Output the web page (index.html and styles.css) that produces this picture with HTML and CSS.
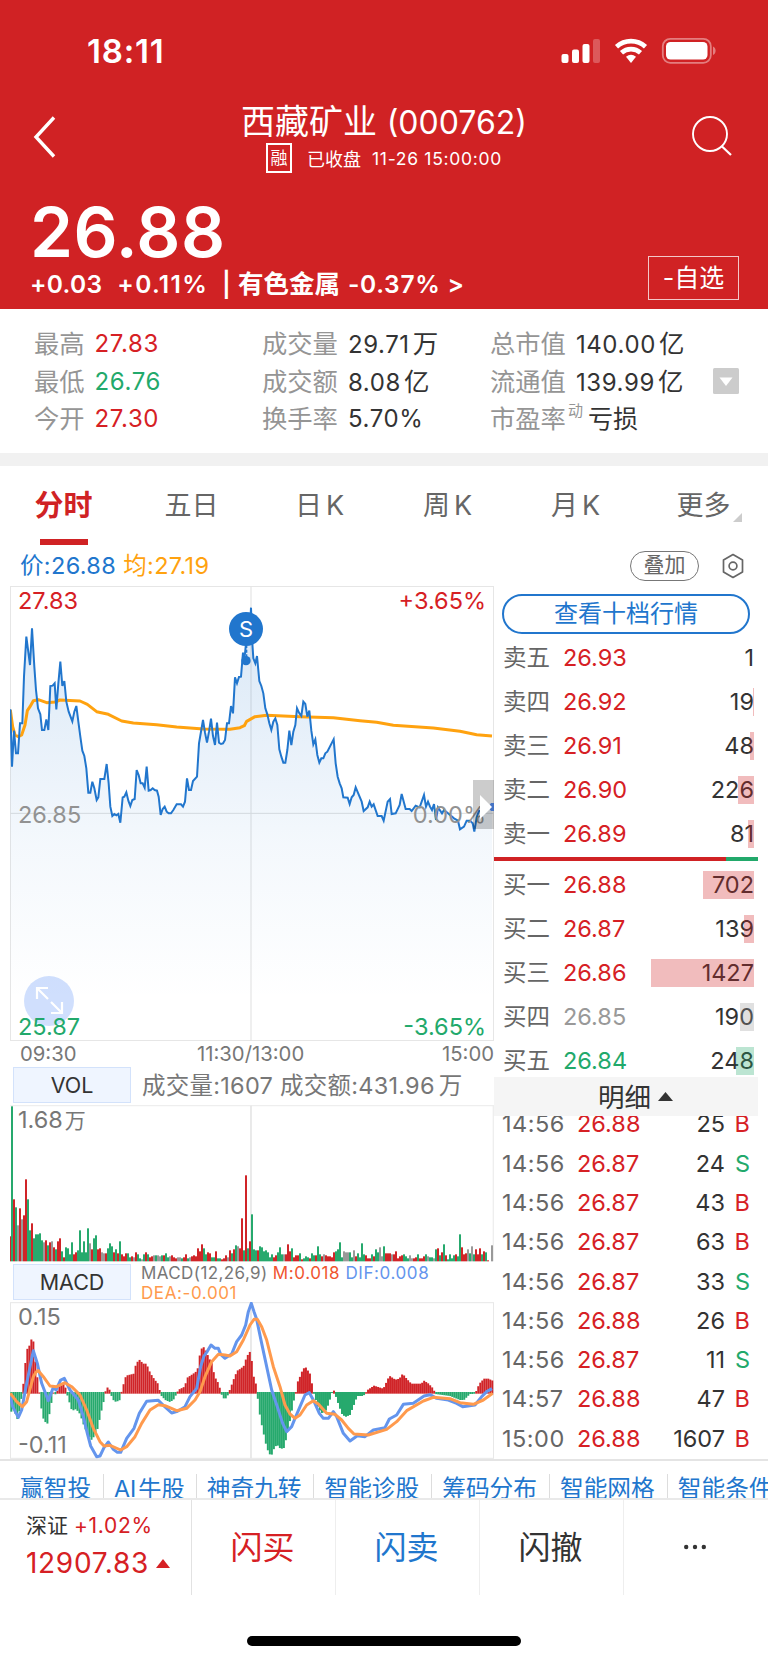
FILE: index.html
```
<!DOCTYPE html>
<html lang="zh-CN">
<head>
    <meta charset="UTF-8">
    <meta name="viewport" content="width=device-width, initial-scale=1.0">
    <title>西藏矿业 (000762)</title>
    <link rel="stylesheet" href="styles.css">
</head>
<body>

    <!-- Header -->
    <header class="header">
        <div class="status-bar">
            <span class="clock">18:11</span>
            <svg class="status-icons" width="156" height="28" viewBox="0 0 156 28">
                <g fill="#fff">
                    <rect x="1.500" y="17" width="7" height="9" rx="2"/>
                    <rect x="12" y="12.500" width="7" height="13.500" rx="2"/>
                    <rect x="22.500" y="7" width="7" height="19" rx="2"/>
                    <rect x="33" y="2" width="7" height="24" rx="2" opacity=".25"/>
                    <path d="M71 26l-5-6.200a8 8 0 0 1 10 0z"/>
                </g>
                <path d="M61.500 15.800a14 14 0 0 1 19 0M56.500 9.800a21.500 21.500 0 0 1 29 0" fill="none" stroke="#fff" stroke-width="4.600"/>
                <rect x="102.800" y="1.800" width="48" height="24" rx="7.500" fill="none" stroke="#fff" stroke-opacity=".42" stroke-width="1.800"/>
                <rect x="106" y="5" width="41.500" height="17.600" rx="4.500" fill="#fff"/>
                <path d="M153 9.500c3.500 1.500 3.500 7 0 8.500z" fill="#fff" opacity=".42"/>
            </svg>
        </div>
        <div class="title-bar">
            <svg width="24" height="44" viewBox="0 0 24 44">
                <path d="M21 2.500L3 22l18 19.500" fill="none" stroke="#fff" stroke-width="3.400"/>
            </svg>
            <div class="title">
                <h1>西藏矿业 <span>(000762)</span></h1>
                <div class="subtitle">
                    <span class="margin-tag">融</span>
                    <span class="closed">已收盘</span>
                    <span class="date">11-26 15:00:00</span>
                </div>
            </div>
            <svg width="42" height="42" viewBox="0 0 42 42">
                <circle cx="20" cy="19" r="17" fill="none" stroke="#fff" stroke-width="1.900"/>
                <path d="M31.500 31L41 40" stroke="#fff" stroke-width="2.200"/>
            </svg>
        </div>
        <div class="quote">
            <div>
                <div class="price">26.88</div>
                <div class="change">
                    <span class="c1">+0.03</span>
                    <span class="c2">+0.11%</span>
                    <span class="c3">|</span>
                    <span class="c4">有色金属</span>
                    <span class="c5">-0.37%</span>
                    <span>&gt;</span>
                </div>
            </div>
            <div class="watch-btn">-自选</div>
        </div>
    </header>

    <!-- Stats -->
    <section class="stats">
        <div class="stat"><label>最高</label><b class="red">27.83</b></div>
        <div class="stat"><label>成交量</label><b>29.71<i>万</i></b></div>
        <div class="stat"><label>总市值</label><b>140.00<i>亿</i></b></div>
        <div class="stat"><label>最低</label><b class="green">26.76</b></div>
        <div class="stat"><label>成交额</label><b>8.08<i>亿</i></b></div>
        <div class="stat"><label>流通值</label><b>139.99<i>亿</i></b></div>
        <div class="stat"><label>今开</label><b class="red">27.30</b></div>
        <div class="stat"><label>换手率</label><b>5.70%</b></div>
        <div class="stat"><label class="pe">市盈率<sup>动</sup></label><b class="cjk">亏损</b></div>
        <svg class="expand" width="27" height="26" viewBox="0 0 27 26">
            <rect width="26" height="26" rx="1.500" fill="#ccc"/>
            <path d="M6.500 9.500h13L13 18z" fill="#fff"/>
        </svg>
    </section>

    <!-- Tabs -->
    <nav class="tabs">
        <a class="active">分时</a>
        <a>五日</a>
        <a>日<span>K</span></a>
        <a>周<span>K</span></a>
        <a>月<span>K</span></a>
        <a class="more">更多</a>
    </nav>

    <div class="legend">
        <span class="now">价:26.88</span>
        <span class="avg">均:27.19</span>
        <span class="overlay">叠加</span>
        <svg width="24" height="28" viewBox="0 0 24 28">
            <path d="M12 2.500l9.500 5.600v11.800L12 25.500l-9.500-5.600V8.100z" fill="none" stroke="#666" stroke-width="1.700" stroke-linejoin="round"/>
            <circle cx="12" cy="14" r="3.900" fill="none" stroke="#666" stroke-width="1.700"/>
        </svg>
    </div>

    <main class="main">
        <div class="charts">
            <div class="chart price-chart">
                <svg width="484" height="455" viewBox="30 18 1452 1365">
                    <defs>
                        <linearGradient id="fill" gradientUnits="userSpaceOnUse" x1="0" y1="83" x2="0" y2="1260">
                            <stop offset="0" stop-color="#1e74cc" stop-opacity=".17"/>
                            <stop offset=".6" stop-color="#1e74cc" stop-opacity=".05"/>
                            <stop offset="1" stop-color="#1e74cc" stop-opacity="0"/>
                        </linearGradient>
                    </defs>
                    <rect x="31.500" y="19.500" width="1449" height="1362" fill="none" stroke="#e6e6e6" stroke-width="3"/>
                    <path d="M753 20V1382M31 700H1480" stroke="#dfdfdf" stroke-width="3"/>
                    <polygon id="area" fill="url(#fill)"/>
                    <polyline fill="none" stroke="#ffa20f" stroke-width="9" stroke-linejoin="round" points="31,390 38,440 45,465 55,470 65,465 75,435 82,392 90,380 100,362 115,359 140,368 165,366 180,360 240,363 262,373 290,395 325,403 365,423 400,429 470,434 530,441 610,447 690,448 720,443 733,437 740,424 765,410 800,406 900,410 1000,413 1080,422 1130,427 1180,436 1300,444 1380,454 1430,464 1476,468"/>
                    <polyline id="line" fill="none" stroke="#2176cd" stroke-width="6"/>
                    <path d="M740 195V235" stroke="#2176cd" stroke-width="4" stroke-dasharray="9 5"/>
                    <circle cx="738" cy="242" r="14" fill="#2176cd"/>
                    <circle cx="738" cy="147" r="51" fill="#2176cd"/>
                    <text x="738" y="171" class="mark">S</text>
                </svg>
                <span class="tl red">27.83</span>
                <span class="tr red">+3.65%</span>
                <span class="ml">26.85</span>
                <span class="mr">0.00%</span>
                <svg class="zoom-btn" width="50" height="50" viewBox="0 0 50 50">
                    <circle cx="25" cy="25" r="25" fill="#6495fa" opacity=".3"/>
                    <path d="M24 23L13 12M13 23V12H24M27 26L38 37M27 37H38V26" fill="none" stroke="#fff" stroke-width="2.200"/>
                </svg>
                <span class="bl green">25.87</span>
                <span class="br green">-3.65%</span>
                <svg class="drawer" width="21" height="49" viewBox="0 0 21 49">
                    <rect width="21" height="49" fill="#000" opacity=".2"/>
                    <path d="M15 27l3-4h3v8h-3z" fill="#4573c4"/>
                    <path d="M7 15v24l12-12z" fill="#fff"/>
                </svg>
            </div>
            <div class="axis"><span>09:30</span><span>11:30/13:00</span><span>15:00</span></div>

            <div class="indicator vol-row">
                <span class="pick">VOL</span>
                <span class="vol-text">成交量:1607 成交额:431.96<i>万</i></span>
            </div>
            <div class="chart">
                <svg width="484" height="157" viewBox="30 45 1452 471">
                    <path d="M31 47H1480V514" fill="none" stroke="#eee" stroke-width="4"/>
                    <path d="M753 47V514" stroke="#dfdfdf" stroke-width="4"/>
                    <g id="vol"></g>
                </svg>
                <span class="tl vol-max">1.68<i>万</i></span>
            </div>

            <div class="indicator macd-row">
                <span class="pick">MACD</span>
                <div class="macd-text">
                    <span>MACD(12,26,9)</span>
                    <span class="m">M:0.018</span>
                    <span class="dif">DIF:0.008</span>
                    <span class="dea">DEA:-0.001</span>
                </div>
            </div>
            <div class="chart">
                <svg width="484" height="157" viewBox="30 126 1452 471">
                    <rect x="31.500" y="128" width="1449" height="467" fill="none" stroke="#e8e8e8" stroke-width="3"/>
                    <path d="M753 128V595" stroke="#dfdfdf" stroke-width="4"/>
                    <g id="macd"></g>
                    <polyline fill="none" stroke="#6495ed" stroke-width="9" stroke-linejoin="round" points="31,410 38,440 55,472 65,450 80,370 100,272 112,310 125,370 145,422 160,382 168,390 182,360 193,355 210,390 235,420 250,470 262,520 272,558 290,590 300,588 312,563 325,546 340,568 352,577 362,577 380,535 402,505 418,460 440,424 475,421 490,436 515,459 530,455 555,440 570,410 590,385 602,320 612,288 622,274 633,255 645,265 655,265 662,283 675,295 695,282 710,245 725,225 737,195 745,155 754,130 762,155 770,178 785,250 800,320 815,390 832,440 848,490 860,515 875,500 885,475 900,440 915,405 928,398 940,420 958,460 970,475 985,475 1000,455 1010,470 1030,520 1050,543 1072,527 1095,530 1120,510 1155,503 1168,477 1190,465 1210,433 1240,430 1272,408 1290,404 1310,415 1345,420 1370,430 1388,440 1425,435 1445,410 1460,395 1476,386"/>
                    <polyline fill="none" stroke="#ff9a4d" stroke-width="9" stroke-linejoin="round" points="31,400 50,425 67,440 80,425 100,350 108,336 115,332 130,350 150,378 170,380 195,368 215,380 240,405 260,450 280,505 300,545 312,558 330,556 362,570 380,560 405,530 425,490 450,450 475,434 495,437 530,452 560,445 585,420 600,395 615,350 635,305 655,283 675,285 690,288 710,275 730,240 750,195 762,178 772,178 785,200 800,240 820,320 840,380 855,435 870,462 885,475 900,465 920,435 940,422 955,432 980,460 1005,463 1025,480 1045,505 1062,522 1105,525 1160,508 1190,485 1220,452 1270,423 1300,412 1350,416 1380,428 1420,433 1450,420 1478,400"/>
                </svg>
                <span class="tl">0.15</span>
                <span class="bl">-0.11</span>
            </div>
        </div>

        <!-- Order book -->
        <div class="book">
            <div class="level-btn">查看十档行情</div>
            <div id="asks"></div>
            <div class="ratio"></div>
            <div id="bids"></div>
            <div class="detail">明细<svg width="15" height="9" viewBox="0 0 15 9"><path d="M7.500 0L15 9H0z" fill="#333"/></svg></div>
            <div class="ticks" id="ticks"></div>
        </div>
    </main>

    <div class="links">
        <a>赢智投</a><a>AI<i>牛股</i></a><a>神奇九转</a><a>智能诊股</a><a>筹码分布</a><a>智能网格</a><a>智能条件单</a>
    </div>

    <!-- Bottom bar -->
    <footer class="bottom">
        <div class="index">
            <div class="index-name">深证 <span class="red">+1.02%</span></div>
            <div class="index-value">12907.83<svg width="14" height="9" viewBox="0 0 14 9"><path d="M7 0l7 9H0z" fill="#d62024"/></svg></div>
        </div>
        <a class="red">闪买</a>
        <a class="blue">闪卖</a>
        <a>闪撤</a>
        <a><svg width="24" height="6" viewBox="0 0 24 6"><g fill="#333"><circle cx="3.200" cy="3" r="2.200"/><circle cx="12" cy="3" r="2.200"/><circle cx="20.800" cy="3" r="2.200"/></g></svg></a>
    </footer>
    <div class="home-indicator"></div>

    <script src="chart.js"></script>
</body>
</html>
```
FILE: styles.css
```
* {
    margin: 0;
    padding: 0;
    box-sizing: border-box;
}
body {
    width: 768px;
    height: 1663px;
    overflow: hidden;
    font-family: Inter, 'Noto Sans CJK SC', sans-serif;
    background-color: #fff;
    color: #333;
}
i, b {
    font-style: normal;
    font-weight: normal;
}
svg {
    display: block;
    flex: none;
}
.red {
    color: #d62024;
}
.green {
    color: #22a96b;
}
.blue {
    color: #2176cd;
}

/* header */
.header {
    height: 309px;
    background-color: #d02224;
    color: #fff;
}
.status-bar {
    height: 102px;
    padding: 0 52px 0 87px;
    display: flex;
    justify-content: space-between;
    align-items: center;
}
.clock {
    font-size: 33px;
    font-weight: 600;
    letter-spacing: 0.8px;
}
.title-bar {
    height: 82px;
    padding: 0 36px 0 33px;
    display: flex;
    justify-content: space-between;
}
.title-bar > svg {
    margin-top: 13px;
}
.title {
    text-align: center;
    margin-left: 21px;
}
.title h1 {
    height: 40px;
    line-height: 40px;
    font-size: 34px;
    font-weight: 400;
}
.title h1 span {
    font-size: 32px;
}
.subtitle {
    height: 32px;
    display: flex;
    justify-content: center;
    align-items: center;
    font-size: 17.5px;
}
.margin-tag {
    width: 26px;
    height: 30px;
    line-height: 26px;
    border: 2px solid #fff;
    font-size: 17px;
}
.closed {
    margin: 0 11px 0 15px;
    font-size: 18px;
}
.date {
    letter-spacing: 0.7px;
}
.quote {
    height: 125px;
    padding: 0 29px 0 30px;
    display: flex;
    justify-content: space-between;
}
.price {
    height: 82px;
    padding-top: 14px;
    line-height: 69px;
    font-size: 69px;
    font-weight: 600;
    letter-spacing: 0.4px;
}
.change {
    height: 36px;
    line-height: 36px;
    display: flex;
    font-size: 24.500px;
    font-weight: 600;
}
.c1 {
    margin-right: 15px;
    letter-spacing: 0.3px;
}
.c2 {
    margin-right: 14px;
    letter-spacing: 1.3px;
}
.c3 {
    margin-right: 7px;
}
.c4 {
    margin-right: 8px;
    font-size: 25.5px;
}
.c5 {
    margin-right: 7px;
    letter-spacing: 0.7px;
}
.watch-btn {
    width: 91px;
    height: 44px;
    line-height: 42px;
    margin-top: 72px;
    border: 1px solid rgba(255, 255, 255, 0.75);
    font-size: 25px;
    text-align: center;
}

/* stats */
.stats {
    position: relative;
    height: 157px;
    padding: 16px 0 0 34px;
    display: grid;
    grid-template-columns: 228px 228px 1fr;
    grid-template-rows: repeat(3, 37.5px);
    border-bottom: 13px solid #f1f1f1;
}
.stat {
    display: flex;
    line-height: 38px;
    font-size: 25.3px;
}
.stat label {
    color: #959595;
    margin-right: 10px;
}
.stat b {
    font-size: 24px;
    letter-spacing: 0.6px;
}
.stat b i {
    margin-left: 3px;
    font-size: 25.5px;
}
.stat .pe {
    margin-right: 5px;
}
.stat .cjk {
    font-size: 25px;
    letter-spacing: 0;
}
.pe sup {
    font-size: 15px;
    line-height: 0;
    vertical-align: 12px;
    margin-left: 2px;
}
.expand {
    position: absolute;
    left: 713px;
    top: 59px;
}

/* tabs */
.tabs {
    height: 79px;
    display: grid;
    grid-template-columns: repeat(6, 1fr);
}
.tabs a {
    position: relative;
    text-align: center;
    padding-right: 1px;
    font-size: 27px;
    line-height: 80px;
    color: #666;
}
.tabs a span {
    margin-left: 4px;
}
.tabs .active {
    color: #d02224;
    font-size: 29px;
    font-weight: bold;
}
.tabs .active::after {
    content: '';
    position: absolute;
    left: 40px;
    top: 73px;
    width: 48px;
    height: 6px;
    background-color: #d02224;
}
.tabs .more::after {
    content: '';
    position: absolute;
    right: 26px;
    top: 47px;
    border-left: 9px solid transparent;
    border-bottom: 9px solid #ccc;
}

.legend {
    height: 41px;
    padding: 0 23px 0 20px;
    display: flex;
    align-items: center;
    font-size: 23.500px;
}
.legend .now, .legend .avg {
    line-height: 30px;
    letter-spacing: 0.35px;
}
.legend .now {
    color: #2176cd;
}
.legend .avg {
    margin-left: 7px;
    color: #ffa20f;
}
.legend .overlay {
    width: 69px;
    height: 30px;
    line-height: 26px;
    margin: 0 22px 0 auto;
    border: 1.5px solid #777;
    border-radius: 15px;
    font-size: 21px;
    text-align: center;
    color: #666;
}

/* charts */
.main {
    height: 875px;
    padding: 0 10px;
    display: flex;
    border-bottom: 2px solid #e4e4e4;
}
.charts {
    width: 484px;
}
.chart {
    position: relative;
}
.chart span {
    position: absolute;
    font-size: 23.500px;
    line-height: 28px;
}
.chart .tl {
    left: 8px;
    top: 1px;
    color: #777;
}
.chart .tr {
    right: 8px;
    top: 1px;
}
.chart .ml {
    left: 8px;
    top: 215px;
    color: #929292;
}
.chart .mr {
    right: 8px;
    top: 215px;
    color: #929292;
}
.chart .bl {
    left: 8px;
    bottom: 0;
    color: #777;
}
.chart .br {
    right: 8px;
    bottom: 0;
}
.price-chart .red {
    color: #d62024;
}
.price-chart .green {
    color: #22a96b;
}
.mark {
    fill: #fff;
    font-size: 66px;
    text-anchor: middle;
}
.zoom-btn {
    position: absolute;
    left: 14px;
    top: 390px;
}
.drawer {
    position: absolute;
    right: 0;
    top: 194px;
}
.axis {
    height: 25px;
    line-height: 25px;
    padding: 0 0 0 10px;
    display: grid;
    grid-template-columns: 177px 1fr auto;
    font-size: 20.3px;
    color: #777;
}
.indicator {
    display: flex;
    color: #777;
}
.pick {
    width: 118px;
    height: 36px;
    line-height: 34px;
    margin: 0 11px 0 3px;
    background-color: #eff5ff;
    border: 1px solid #d3e2fb;
    font-size: 21.500px;
    text-align: center;
    color: #333;
}
.vol-row {
    height: 39px;
    padding-top: 1px;
}
.vol-text {
    font-size: 23.500px;
    line-height: 38px;
    letter-spacing: 0.25px;
}
.vol-text i, .vol-max i {
    margin-left: 4px;
}
.vol-max i {
    margin-left: 2px;
    font-size: 21px;
}
.macd-row {
    height: 40px;
    padding-top: 2px;
}
.macd-text {
    width: 350px;
    margin-top: -1px;
    margin-left: -1px;
    font-size: 17px;
    line-height: 20px;
    letter-spacing: 0.4px;
}
.macd-text .m {
    color: #f0552f;
}
.macd-text .dif {
    color: #6495ed;
}
.macd-text .m, .macd-text .dif {
    letter-spacing: 0.6px;
}
.macd-text .dea {
    display: block;
    color: #ff9a4d;
    letter-spacing: 0.6px;
}

/* order book */
.book {
    width: 264px;
    overflow: hidden;
}
.level-btn {
    width: 248px;
    height: 40px;
    line-height: 35px;
    margin: 8px 0 2px 8px;
    border: 2px solid #2176cd;
    border-radius: 20px;
    font-size: 24px;
    text-align: center;
    color: #2176cd;
}
.level {
    position: relative;
    height: 44px;
    line-height: 44px;
    padding: 0 4px 0 9px;
    display: flex;
    font-size: 23.500px;
}
.level label {
    width: 60px;
    color: #666;
}
.level span:last-of-type {
    margin-left: auto;
}
.level .bar {
    position: absolute;
    right: 4px;
    top: 8px;
    height: 28px;
    opacity: 0.3;
}
.bar.up {
    background-color: #d02224;
}
.bar.down {
    background-color: #22a96b;
}
.bar.flat {
    background-color: #999;
}
.up-text {
    color: #d62024;
}
.down-text {
    color: #22a96b;
}
.flat-text {
    color: #999;
}
.ratio {
    height: 4px;
    margin: 1px 0 2px;
    background: linear-gradient(to right, #d02224 88%, #22a96b 88%);
}
.detail {
    position: relative;
    height: 39px;
    margin-top: -6px;
    padding-left: 19px;
    display: flex;
    justify-content: center;
    align-items: center;
    gap: 7px;
    background-color: #f5f5f5;
    font-size: 26.5px;
    line-height: 38px;
}
.ticks {
    height: 342px;
    overflow: hidden;
    display: flex;
    flex-direction: column;
    justify-content: flex-end;
}
.tick {
    flex: none;
    height: 39.300px;
    line-height: 39.300px;
    padding: 0 8px 0 8px;
    display: grid;
    grid-template-columns: 75px 1fr auto 25px;
    font-size: 23.500px;
}
.tick span:first-child {
    color: #666;
    letter-spacing: 0.5px;
}
.tick span:last-child {
    text-align: right;
}

/* links */
.links {
    height: 39px;
    padding: 13px 0 0 10px;
    display: flex;
    overflow: hidden;
    white-space: nowrap;
    border-bottom: 2px solid #e9e9e9;
}
.links a {
    flex: none;
    padding: 0 12px 0 10px;
    border-right: 1px solid #ddd;
    font-size: 23.700px;
    line-height: 30px;
    color: #2176cd;
}
.links a:nth-child(2) {
    padding-right: 11px;
    font-size: 23.200px;
}
.links i {
    margin-left: 2px;
}

/* bottom bar */
.bottom {
    height: 95px;
    display: grid;
    grid-template-columns: 192px 144px 144px 144px 144px;
}
.bottom > a {
    display: flex;
    justify-content: center;
    align-items: center;
    padding: 0 2px 6px 0;
    font-size: 32px;
    border-right: 1px solid #eee;
}
.bottom > a:last-child {
    border-right: none;
    padding-bottom: 2px;
}
.index {
    padding: 8px 0 0 26px;
    border-right: 1px solid #e2e2e2;
}
.index-name {
    height: 36px;
    line-height: 35px;
    font-size: 21px;
}
.index-name .red {
    letter-spacing: 0.7px;
}
.index-value {
    height: 38px;
    display: flex;
    align-items: center;
    gap: 7px;
    font-size: 28px;
    letter-spacing: 0.7px;
    color: #d62024;
}
.home-indicator {
    width: 274px;
    height: 10px;
    margin: 41px auto 0;
    border-radius: 5px;
    background-color: #000;
}
```
FILE: chart.js
```
const RED = "#d02428";
const GREEN = "#26a96d";
const COLORS = { r: RED, g: GREEN, n: "#999" };

// price line
const points = "31,388 36,560 42,452 48,520 54,520 60,430 67,430 72,290 79,170 90,255 96,145 103,260 108,330 114,385 121,403 126,450 133,450 139,418 145,450 151,318 158,317 164,310 169,388 175,310 181,245 187,318 193,303 199,365 206,395 217,424 223,395 229,378 235,425 241,470 247,512 253,528 259,565 265,638 271,638 277,605 283,625 290,660 295,652 301,597 313,597 320,552 326,610 331,680 337,708 343,702 349,706 355,702 361,728 368,652 373,650 379,637 385,662 391,678 397,660 404,657 410,570 416,585 422,610 428,610 434,623 440,560 446,632 452,630 458,625 464,630 471,632 476,650 482,705 488,687 494,680 500,695 506,700 513,700 520,690 530,673 543,673 549,680 555,665 561,595 567,630 573,630 579,603 591,590 597,490 609,420 615,458 621,488 627,455 633,416 639,468 645,495 651,428 657,488 663,492 669,490 675,480 681,430 687,430 693,378 699,400 705,292 711,310 717,291 723,290 729,218 733,240 738,190 744,160 750,150 753,83 757,190 760,235 766,250 771,228 778,303 784,318 790,340 796,385 802,403 808,430 814,450 820,425 826,415 832,435 838,508 844,530 850,548 856,548 862,510 868,452 874,495 880,455 886,435 891,385 898,400 904,408 910,365 916,372 922,410 928,392 934,452 940,493 946,478 952,525 958,548 964,535 970,535 976,520 982,515 1001,478 1007,550 1013,590 1019,610 1025,625 1030,652 1043,653 1049,672 1055,652 1061,645 1067,622 1085,665 1091,693 1103,682 1109,665 1115,680 1121,673 1133,708 1145,708 1151,722 1163,665 1170,657 1175,702 1187,700 1199,675 1205,642 1217,687 1229,687 1235,693 1247,677 1259,682 1272,645 1278,680 1284,665 1290,680 1296,690 1302,672 1308,720 1314,682 1326,700 1332,690 1344,700 1362,715 1374,722 1380,748 1392,740 1400,722 1410,722 1418,730 1423,755 1430,712 1437,692 1450,700 1462,685 1476,680";
document.getElementById("line").setAttribute("points", points);
document.getElementById("area").setAttribute("points", points + " 1476,1380 31,1380");

// volume, one bar per minute: colour + height
const vol = "r25 g155 r62 g54 n36 r53 n42 r46 r82 g62 g31 r38 g23 g27 g27 g28 g21 n19 r21 g16 r19 n20 r14 g12 r20 r23 g10 r4 g14 g13 g7 g19 r7 r9 g11 g31 g9 g20 g9 g33 n18 r12 g23 g26 r12 r13 n9 n8 r8 g13 g18 g15 r9 g12 r8 g20 r7 r5 r8 g8 g4 r5 n4 r9 g7 g3 n2 g7 r9 g7 r4 r5 n6 g6 n6 n5 g6 r6 g8 g4 n5 r6 r4 r3 n4 n4 g3 r4 r7 g3 n4 r5 r6 r5 r13 r10 r17 g13 g7 r9 r8 g4 g4 r10 g3 g3 r2 r3 r6 n4 r11 g8 r12 g16 n15 r13 r43 g11 r86 g13 r20 g47 g12 g11 r11 g15 g14 g10 g11 g9 g4 g7 r4 r6 g9 g14 g7 n7 r7 r17 r10 g13 r4 r6 r6 g8 r2 g3 g5 g4 r3 g8 g6 r6 g15 g7 r5 n7 r6 r5 r5 r4 r9 g10 g12 g19 g4 n10 n9 n9 g9 g4 n11 r5 g8 g4 g18 g7 r6 r3 r3 g7 r5 g12 g9 n14 n5 g15 r8 r8 r8 n7 r7 r10 r3 r5 r6 g7 g5 g3 n6 n3 r3 r4 g7 r3 r3 r5 g7 n5 g4 g4 n3 g12 r13 g6 r9 g17 r6 g2 g7 g3 g6 r7 g5 g27 r14 r7 r8 n12 g8 n15 g7 r12 r7 r13 g7 r10 g9 r1 r0 n16";
const bars = vol.split(" ");
const step = 1446 / (bars.length - 1);
document.getElementById("vol").innerHTML = bars.map((b, i) => {
    const h = b.slice(1) * 3;
    return `<rect x="${i ? 27 + i * step : 30}" y="${514 - h}" width="${i ? 6 : 3}" height="${h}" fill="${COLORS[b[0]]}"/>`;
}).join("");

// MACD histogram, sampled between the turning points
const macd = [[33,-18],[36,-20],[42,-14],[48,-24],[54,-27],[60,-14],[66,-2],[72,14],[78,37],[84,47],[90,47],[96,56],[102,49],[108,23],[114,12],[120,-5],[126,-20],[132,-28],[144,-31],[150,-17],[156,-7],[162,3],[168,-3],[174,4],[180,8],[190,9],[198,4],[204,-5],[210,-11],[216,-18],[228,-16],[240,-21],[250,-31],[262,-41],[275,-47],[285,-42],[295,-34],[300,-24],[312,-7],[318,4],[326,6],[332,-1],[340,-7],[348,-9],[360,-7],[366,3],[378,17],[402,19],[408,29],[418,33],[430,29],[440,29],[446,23],[454,18],[464,13],[474,9],[478,4],[482,-2],[496,-7],[510,-9],[520,-7],[528,-2],[536,3],[554,6],[562,15],[580,19],[592,22],[600,39],[608,47],[616,43],[628,34],[636,29],[644,16],[656,9],[664,-1],[674,-7],[684,-2],[692,5],[704,16],[712,22],[722,24],[732,27],[740,36],[752,42],[758,24],[764,10],[768,9],[772,-1],[776,-14],[782,-27],[790,-39],[796,-49],[806,-60],[814,-63],[824,-54],[832,-52],[842,-56],[852,-55],[860,-44],[868,-31],[876,-17],[882,-7],[888,1],[892,10],[900,16],[908,23],[916,26],[924,22],[930,19],[936,9],[940,1],[946,-5],[956,-16],[966,-20],[976,-19],[986,-11],[994,-2],[1000,4],[1006,-2],[1018,-14],[1026,-21],[1036,-24],[1050,-22],[1062,-12],[1072,-3],[1090,-3],[1104,3],[1122,7],[1150,4],[1160,11],[1168,17],[1186,13],[1198,14],[1208,19],[1220,14],[1234,9],[1264,9],[1272,12],[1286,9],[1300,4],[1306,-1],[1350,-3],[1380,-7],[1392,-7],[1410,-1],[1422,-1],[1428,1],[1438,9],[1452,14],[1465,14],[1478,12]];
let html = "";
let k = 0;
for (let i = 0; i < 241; i++) {
    const x = 34 + i * 6.012;
    while (k < macd.length - 2 && macd[k + 1][0] < x) k++;
    const [x0, h0] = macd[k];
    const [x1, h1] = macd[k + 1];
    const t = Math.min(1, (x - x0) / (x1 - x0));
    const h = (h0 + (h1 - h0) * t) * 3;
    const y = h > 0 ? 398 - h : 396;
    html += `<rect x="${x - 3}" y="${y}" width="6" height="${Math.abs(h) + 3}" fill="${h > 0 ? RED : GREEN}"/>`;
}
document.getElementById("macd").innerHTML = html;

// order book: label, price, amount, bar width, direction
const asks = [
    ["卖五", "26.93", 1, 0, "up"],
    ["卖四", "26.92", 19, 1, "up"],
    ["卖三", "26.91", 48, 4, "up"],
    ["卖二", "26.90", 226, 16, "up"],
    ["卖一", "26.89", 81, 6, "up"]
];
const bids = [
    ["买一", "26.88", 702, 51, "up"],
    ["买二", "26.87", 139, 10, "up"],
    ["买三", "26.86", 1427, 103, "up"],
    ["买四", "26.85", 190, 14, "flat"],
    ["买五", "26.84", 248, 18, "down"]
];
const level = ([name, price, amount, width, dir]) =>
    `<div class="level"><label>${name}</label><span class="${dir}-text">${price}</span><span>${amount}</span><div class="bar ${dir}" style="width: ${width}px"></div></div>`;
document.getElementById("asks").innerHTML = asks.map(level).join("");
document.getElementById("bids").innerHTML = bids.map(level).join("");

const ticks = [
    ["14:56", "26.88", 25, "B"],
    ["14:56", "26.87", 24, "S"],
    ["14:56", "26.87", 43, "B"],
    ["14:56", "26.87", 63, "B"],
    ["14:56", "26.87", 33, "S"],
    ["14:56", "26.88", 26, "B"],
    ["14:56", "26.87", 11, "S"],
    ["14:57", "26.88", 47, "B"],
    ["15:00", "26.88", 1607, "B"]
];
document.getElementById("ticks").innerHTML = ticks.map(([time, price, amount, side]) =>
    `<div class="tick"><span>${time}</span><span class="up-text">${price}</span><span>${amount}</span><span class="${side === "B" ? "up" : "down"}-text">${side}</span></div>`
).join("");
```
